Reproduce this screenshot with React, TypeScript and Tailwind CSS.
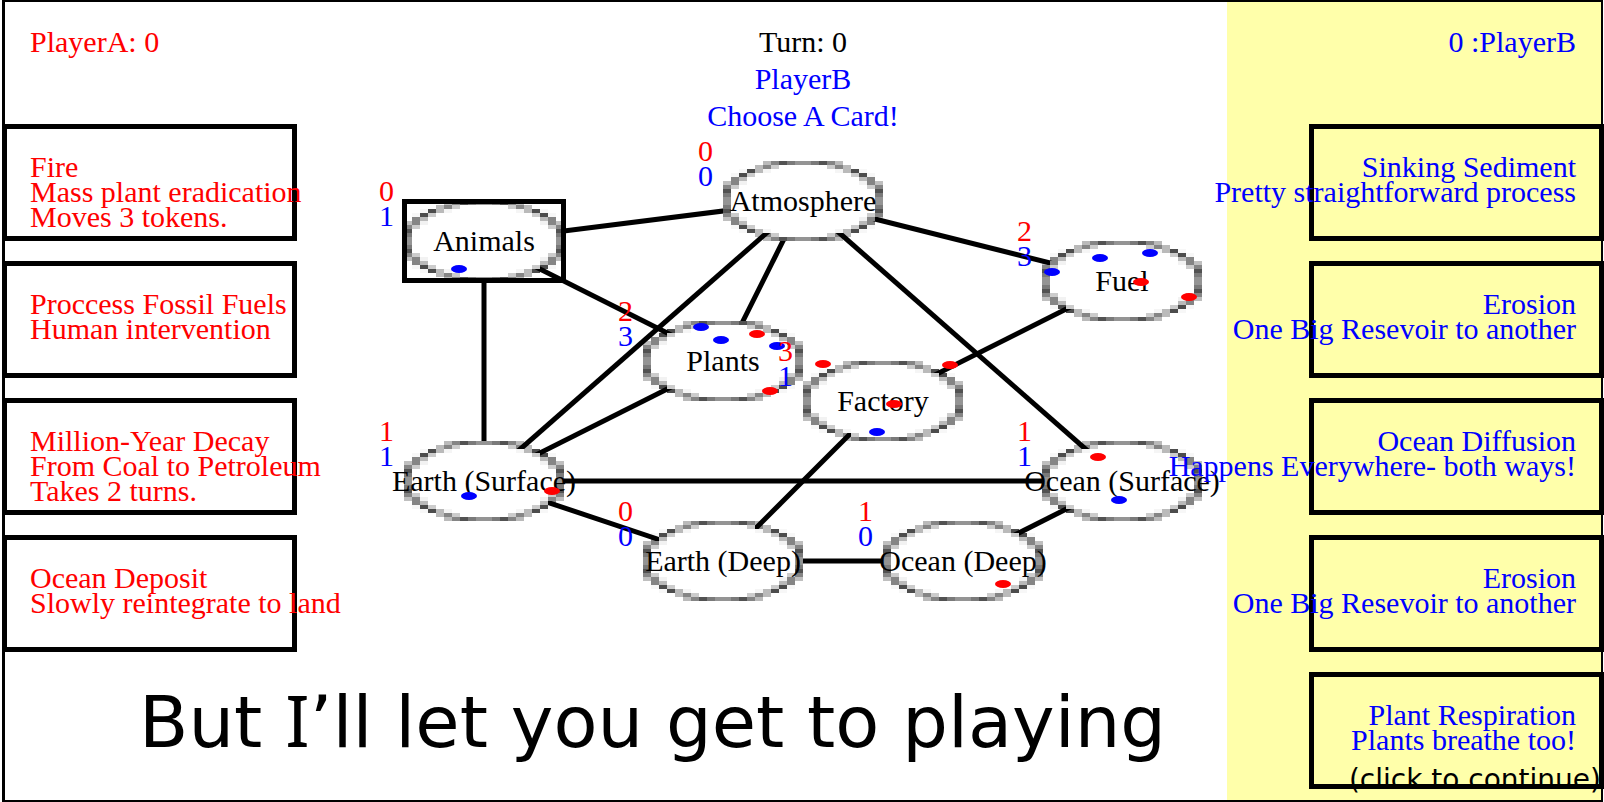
import React from "react";

type Owner = "a" | "b";

interface Card {
  title: string;
  detail: string;
  note?: string;
}

interface Token {
  owner: Owner;
  x: number;
  y: number;
}

interface Reservoir {
  id: string;
  label: string;
  x: number;
  y: number;
  a: number;
  b: number;
  selected?: boolean;
  tokens: Token[];
}

const cardsA: Card[] = [
  { title: "Fire", detail: "Mass plant eradication", note: "Moves 3 tokens." },
  { title: "Proccess Fossil Fuels", detail: "Human intervention" },
  { title: "Million-Year Decay", detail: "From Coal to Petroleum", note: "Takes 2 turns." },
  { title: "Ocean Deposit", detail: "Slowly reintegrate to land" },
];

const cardsB: Card[] = [
  { title: "Sinking Sediment", detail: "Pretty straightforward process" },
  { title: "Erosion", detail: "One Big Resevoir to another" },
  { title: "Ocean Diffusion", detail: "Happens Everywhere- both ways!" },
  { title: "Erosion", detail: "One Big Resevoir to another" },
  { title: "Plant Respiration", detail: "Plants breathe too!" },
];

// Node centres are in board units; token positions are relative to their node's centre.
const reservoirs: Reservoir[] = [
  { id: "atmosphere", label: "Atmosphere", x: 424, y: 67, a: 0, b: 0, tokens: [] },
  {
    id: "animals", label: "Animals", x: 105, y: 107, a: 0, b: 1, selected: true,
    tokens: [{ owner: "b", x: -25, y: 28 }],
  },
  {
    id: "fuel", label: "Fuel", x: 743, y: 147, a: 2, b: 3,
    tokens: [
      { owner: "b", x: -70, y: -9 },
      { owner: "b", x: -22, y: -23 },
      { owner: "b", x: 28, y: -28 },
      { owner: "a", x: 19, y: 1 },
      { owner: "a", x: 67, y: 16 },
    ],
  },
  {
    id: "plants", label: "Plants", x: 344, y: 227, a: 2, b: 3,
    tokens: [
      { owner: "b", x: -22, y: -34 },
      { owner: "b", x: -2, y: -21 },
      { owner: "a", x: 34, y: -27 },
      { owner: "b", x: 54, y: -15 },
      { owner: "a", x: 47, y: 30 },
    ],
  },
  {
    id: "factory", label: "Factory", x: 504, y: 267, a: 3, b: 1,
    tokens: [
      { owner: "a", x: -60, y: -37 },
      { owner: "a", x: 67, y: -36 },
      { owner: "a", x: 11, y: 3 },
      { owner: "b", x: -6, y: 31 },
    ],
  },
  {
    id: "earthSurface", label: "Earth (Surface)", x: 105, y: 347, a: 1, b: 1,
    tokens: [
      { owner: "b", x: -15, y: 15 },
      { owner: "a", x: 68, y: 10 },
    ],
  },
  {
    id: "oceanSurface", label: "Ocean (Surface)", x: 743, y: 347, a: 1, b: 1,
    tokens: [
      { owner: "a", x: -24, y: -24 },
      { owner: "b", x: -3, y: 19 },
    ],
  },
  { id: "earthDeep", label: "Earth (Deep)", x: 344, y: 427, a: 0, b: 0, tokens: [] },
  {
    id: "oceanDeep", label: "Ocean (Deep)", x: 584, y: 427, a: 1, b: 0,
    tokens: [{ owner: "a", x: 40, y: 23 }],
  },
];

const paths: [string, string][] = [
  ["atmosphere", "animals"],
  ["atmosphere", "plants"],
  ["atmosphere", "fuel"],
  ["atmosphere", "earthSurface"],
  ["atmosphere", "oceanSurface"],
  ["animals", "plants"],
  ["animals", "earthSurface"],
  ["plants", "earthSurface"],
  ["fuel", "factory"],
  ["factory", "earthDeep"],
  ["earthSurface", "oceanSurface"],
  ["earthSurface", "earthDeep"],
  ["earthDeep", "oceanDeep"],
  ["oceanDeep", "oceanSurface"],
];

const byId = Object.fromEntries(reservoirs.map((r) => [r.id, r]));

// One quarter of the 20x20 ring sprite: [column, row, darkness].
const quarter: [number, number, number][] = [
  [5, 0, 0.27], [6, 0, 0.48], [7, 0, 0.68], [8, 0, 0.52], [9, 0, 0.42],
  [4, 1, 0.27], [5, 1, 0.48], [6, 1, 0.2],
  [2, 2, 0.03], [3, 2, 0.7], [4, 2, 0.27], [5, 2, 0.04],
  [1, 3, 0.03], [2, 3, 0.7], [3, 3, 0.2],
  [1, 4, 0.48], [2, 4, 0.27],
  [0, 5, 0.25], [1, 5, 0.48], [2, 5, 0.05],
  [0, 6, 0.48], [1, 6, 0.2],
  [0, 7, 0.68], [0, 8, 0.52], [0, 9, 0.42],
];

// First opaque column of each row in the upper half of the sprite.
const opaqueFrom = [6, 6, 4, 3, 2, 1, 0, 0, 0, 0];

function Ring() {
  return (
    <svg
      viewBox="0 0 20 20"
      preserveAspectRatio="none"
      shapeRendering="crispEdges"
      className="block h-20 w-40"
      aria-hidden="true"
    >
      {opaqueFrom.map((s, row) => (
        <g key={row} fill="#fff">
          <rect x={s} y={row} width={20 - 2 * s} height={1} />
          <rect x={s} y={19 - row} width={20 - 2 * s} height={1} />
        </g>
      ))}
      {quarter.map(([x, y, o]) => (
        <g key={`${x}-${y}`} fill="#000" fillOpacity={o}>
          <rect x={x} y={y} width={1} height={1} />
          <rect x={19 - x} y={y} width={1} height={1} />
          <rect x={x} y={19 - y} width={1} height={1} />
          <rect x={19 - x} y={19 - y} width={1} height={1} />
        </g>
      ))}
    </svg>
  );
}

function ReservoirNode({ node }: { node: Reservoir }) {
  return (
    <div
      className="absolute h-20 w-40 -translate-x-1/2 -translate-y-1/2"
      style={{ left: node.x, top: node.y }}
    >
      <button type="button" className="relative block h-20 w-40 cursor-pointer">
        <Ring />
        <span className="absolute inset-0 flex items-center justify-center pb-[2px] whitespace-nowrap">
          {node.label}
        </span>
      </button>
      {node.selected && (
        <div className="pointer-events-none absolute -inset-[2px] border-5 border-black" />
      )}
      {node.tokens.map((t, i) => (
        <span
          key={i}
          className={`absolute h-2 w-4 -translate-x-1/2 -translate-y-1/2 rounded-[50%] ${
            t.owner === "a" ? "bg-[#ff0000]" : "bg-[#0000ff]"
          }`}
          style={{ left: 80 + t.x, top: 40 + t.y }}
        />
      ))}
      <div className="absolute -top-[23px] -left-[25px] leading-[25px]">
        <div className="text-[#ff0000]">{node.a}</div>
        <div className="text-[#0000ff]">{node.b}</div>
      </div>
    </div>
  );
}

function Board() {
  return (
    <div className="relative h-[480px] w-[848px] shrink-0 leading-[25px]">
      <svg viewBox="0 0 848 480" className="absolute inset-0 h-full w-full" aria-hidden="true">
        {paths.map(([from, to]) => (
          <line
            key={`${from}-${to}`}
            x1={byId[from].x}
            y1={byId[from].y}
            x2={byId[to].x}
            y2={byId[to].y}
            stroke="#000"
            strokeWidth={5}
          />
        ))}
      </svg>
      {reservoirs.map((node) => (
        <ReservoirNode key={node.id} node={node} />
      ))}
    </div>
  );
}

function CardButton({ card, side }: { card: Card; side: "left" | "right" }) {
  return (
    <button
      type="button"
      className={`flex h-[117px] w-[295px] cursor-pointer flex-col border-5 border-black px-[23px] pt-[25px] leading-[25px] whitespace-nowrap ${
        side === "left" ? "items-start" : "items-end"
      }`}
    >
      <span>{card.title}</span>
      <span>{card.detail}</span>
      {card.note && <span>{card.note}</span>}
    </button>
  );
}

export default function App() {
  return (
    <div className="flex min-h-screen overflow-hidden bg-white pr-px pl-[2px] font-['Liberation_Serif',serif] text-[30px] text-black">
      <main className="relative flex w-full border-y-2 border-r-2 border-l-3 border-black">
        <aside className="flex w-[374px] shrink-0 flex-col pt-[21px] text-[#ff0000]">
          <h2 className="pl-[25px] leading-[37px]">PlayerA: 0</h2>
          <div className="mt-16 -ml-[3px] flex flex-col items-start gap-5">
            {cardsA.map((card, i) => (
              <CardButton key={i} card={card} side="left" />
            ))}
          </div>
        </aside>

        <section className="flex min-w-0 flex-1 flex-col items-center pt-[21px]">
          <header className="h-[111px] text-center leading-[37px]">
            <h1>Turn: 0</h1>
            <p className="text-[#0000ff]">PlayerB</p>
            <p className="text-[#0000ff]">Choose A Card!</p>
          </header>
          <Board />
        </section>

        <aside className="relative flex w-[374px] shrink-0 flex-col bg-[#ffffaa] pt-[21px] text-[#0000ff]">
          <h2 className="pr-[25px] text-right leading-[37px]">0 :PlayerB</h2>
          <div className="mt-16 -mr-[3px] flex flex-col items-end gap-5">
            {cardsB.map((card, i) => (
              <CardButton key={i} card={card} side="right" />
            ))}
          </div>
        </aside>

        <p className="absolute bottom-[29px] left-[134px] font-[Verdana,'DejaVu_Sans',sans-serif] text-[72px] leading-[98px] whitespace-nowrap">
          But <span className="font-['Noto_Sans',sans-serif]">I</span>’ll let you get to playing
        </p>
        <button
          type="button"
          className="absolute right-0 bottom-0 cursor-pointer font-[Verdana,'DejaVu_Sans',sans-serif] text-[28px] leading-[40px] whitespace-nowrap"
        >
          (click to continue)
        </button>
      </main>
    </div>
  );
}
